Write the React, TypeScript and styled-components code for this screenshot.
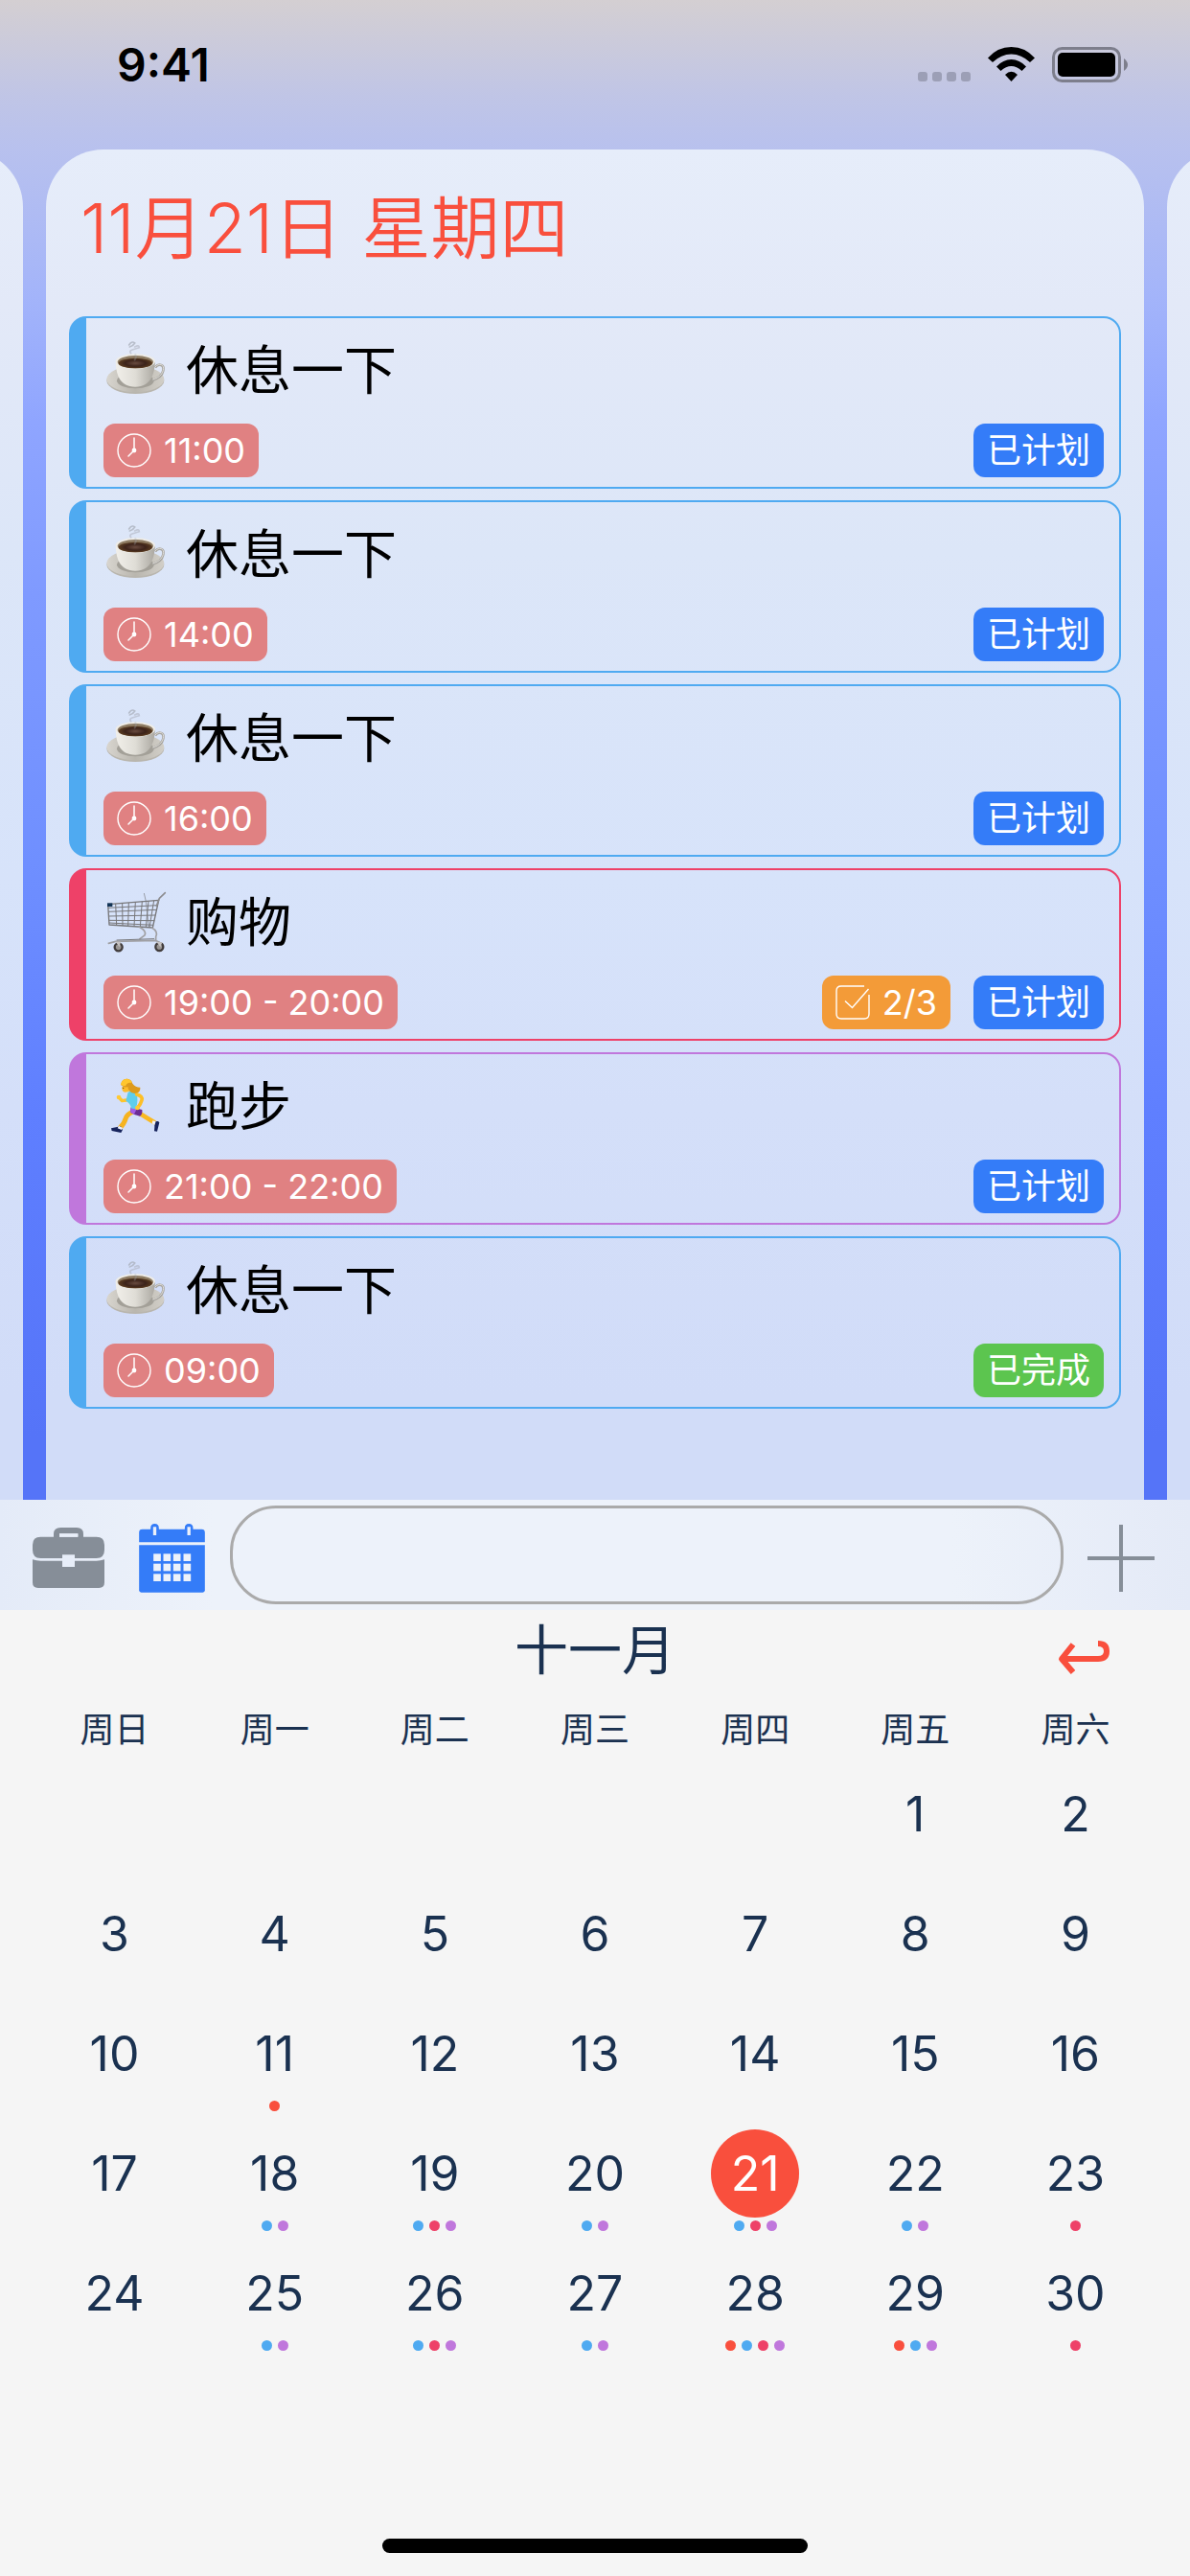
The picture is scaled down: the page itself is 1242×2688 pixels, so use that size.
import React from "react";
import styled, { createGlobalStyle } from "styled-components";

const GlobalStyle = createGlobalStyle`
  *, *::before, *::after { box-sizing: border-box; }
  body {
    margin: 0;
    font-family: Inter, "Noto Sans CJK SC", sans-serif;
    background: #f5f5f5;
  }
  button, input { font: inherit; }
  h1, h2, h3, ul { margin: 0; padding: 0; font-weight: inherit; }
`;

const palette = {
  sky: "#4faaf1",
  rose: "#ee4168",
  violet: "#c077dc",
  coral: "#f94f3d",
  blue: "#347cf8",
  green: "#5cc54f",
  orange: "#f39b38",
  brick: "#e08182",
  ink: "#1a3150",
  grey: "#868e98",
};

type Tone = keyof typeof palette;

const Page = styled.div`
  min-height: 100vh;
  display: flex;
  flex-direction: column;
`;

const Planner = styled.section`
  display: flex;
  flex-direction: column;
  background: linear-gradient(
    #d4cfd2 0,
    #cccbda 40px,
    #c0c5e6 100px,
    #b8c1ee 156px,
    #a3b4fa 310px,
    #8fa5ff 440px,
    #7f9aff 620px,
    #6f8fff 900px,
    #5f7fff 1160px,
    #5574f8 1500px
  );
`;

const StatusBar = styled.header`
  height: 156px;
  padding: 0 64px 20px 122px;
  display: flex;
  align-items: center;
  justify-content: space-between;
`;

const Clock = styled.time`
  font-size: 48px;
  line-height: 56px;
  font-weight: 600;
  color: #000;
`;

const StatusIcons = styled.svg`
  width: 221px;
  height: 40px;
  display: block;
`;

const Carousel = styled.main`
  display: flex;
  justify-content: center;
  gap: 24px;
  overflow: hidden;
`;

const DayPanel = styled.section`
  flex: 0 0 calc(100% - 96px);
  padding: 32px 24px 95px;
  border-radius: 60px 60px 0 0;
  background: linear-gradient(
    #e6edfa 0,
    #e3e9f8 160px,
    #dce6f8 420px,
    #d7e3fa 760px,
    #d4dff9 1000px,
    #d1dcf8 1300px
  );
`;

const DayTitle = styled.h1`
  padding: 0 12px;
  margin-bottom: 42px;
  font-size: 72px;
  line-height: 100px;
  font-weight: 350;
  color: ${palette.coral};
`;

const TaskList = styled.ul`
  list-style: none;
  display: flex;
  flex-direction: column;
  gap: 12px;
`;

const TaskCard = styled.li<{ $tone: Tone }>`
  height: 180px;
  padding: 16px 16px 10px 18px;
  border: 2px solid ${(p) => palette[p.$tone]};
  border-left-width: 18px;
  border-radius: 18px;
  display: flex;
  flex-direction: column;
  justify-content: space-between;
`;

const TaskHead = styled.div`
  display: flex;
  align-items: center;
  gap: 18px;
`;

const Emoji = styled.svg`
  width: 68px;
  height: 68px;
  flex: none;
`;

const TaskName = styled.h2`
  padding-top: 4px;
  font-size: 55px;
  line-height: 68px;
  font-weight: 400;
  color: #000;
`;

const TaskFoot = styled.div`
  display: flex;
  align-items: center;
  gap: 24px;
`;

const Badge = styled.span<{ $tone: Tone }>`
  height: 56px;
  padding: 0 14px;
  border-radius: 12px;
  display: flex;
  align-items: center;
  gap: 13px;
  font-size: 36px;
  line-height: 56px;
  white-space: nowrap;
  color: #fff;
  background: ${(p) => palette[p.$tone]};

  svg {
    width: 36px;
    height: 36px;
    flex: none;
  }
`;

const TimeBadge = styled(Badge)`
  margin-right: auto;
`;

const Toolbar = styled.form`
  height: 115px;
  padding: 0 36px 0 34px;
  display: flex;
  align-items: center;
  background: linear-gradient(90deg, #e4ebf8 0, #edf2fa 18%, #edf2fa 80%, #e4eaf7 100%);
`;

const IconButton = styled.button<{ $tone: Tone }>`
  padding: 6px 0 0;
  border: 0;
  background: none;
  color: ${(p) => palette[p.$tone]};
  display: flex;

  svg {
    display: block;
  }
`;

const ModeButtons = styled.div`
  display: flex;
  align-items: center;
  gap: 36px;
  margin-right: 26px;
`;

const EntryInput = styled.input`
  flex: 1;
  min-width: 0;
  height: 103px;
  margin-right: 24px;
  padding: 0 44px;
  border: 3px solid #aaa;
  border-radius: 48px;
  background: none;
  font-size: 48px;
  color: #000;
  outline: none;
`;

const CalendarPanel = styled.section`
  flex: 1;
  padding: 0 36px 24px;
  display: flex;
  flex-direction: column;
  color: ${palette.ink};
`;

const MonthBar = styled.div`
  height: 84px;
  padding: 0 48px;
  display: grid;
  grid-template-columns: 1fr auto 1fr;
  align-items: center;
`;

const MonthName = styled.h2`
  grid-column: 2;
  font-size: 56px;
  line-height: 84px;
  font-weight: 400;
`;

const TodayButton = styled(IconButton)`
  justify-self: end;
  padding-top: 16px;
`;

const MonthTable = styled.table`
  width: 100%;
  table-layout: fixed;
  border-collapse: collapse;
`;

const Weekday = styled.th`
  height: 83px;
  padding: 0 0 2px;
  font-size: 36px;
  line-height: 48px;
  font-weight: 400;
`;

const DayCell = styled.td`
  height: 125px;
  padding: 0;
  vertical-align: top;
`;

const DayButton = styled.button<{ $selected: boolean }>`
  width: 92px;
  height: 92px;
  margin: 0 auto;
  padding: 0;
  border: 0;
  border-radius: 50%;
  display: block;
  font-size: 50px;
  line-height: 92px;
  text-align: center;
  color: ${(p) => (p.$selected ? "#fff" : palette.ink)};
  background: ${(p) => (p.$selected ? palette.coral : "none")};
`;

const Dots = styled.div`
  margin-top: 3px;
  display: flex;
  justify-content: center;
  gap: 6px;
`;

const Dot = styled.span<{ $tone: Tone }>`
  width: 11px;
  height: 11px;
  border-radius: 50%;
  background: ${(p) => palette[p.$tone]};
`;

const HomeIndicator = styled.div`
  width: 444px;
  height: 15px;
  margin: auto auto 0;
  border-radius: 8px;
  background: #000;
`;

const CupIcon = () => (
  <Emoji viewBox="24 30 204 204" role="img" aria-label="咖啡">
    <defs>
      <linearGradient id="cupBody" x1="0" x2="1">
        <stop offset="0" stopColor="#f1efea" />
        <stop offset="0.5" stopColor="#dfddd6" />
        <stop offset="1" stopColor="#aaa7a0" />
      </linearGradient>
      <linearGradient id="saucer" x1="0" x2="1">
        <stop offset="0" stopColor="#d8d5cf" />
        <stop offset="0.5" stopColor="#b9b6ae" />
        <stop offset="1" stopColor="#d2cfc8" />
      </linearGradient>
      <radialGradient id="coffee">
        <stop offset="0" stopColor="#6a4c40" />
        <stop offset="0.6" stopColor="#3c231a" />
        <stop offset="1" stopColor="#5b3d22" />
      </radialGradient>
    </defs>
    <ellipse cx="124" cy="171" rx="90" ry="42" fill="#b9b6ae" />
    <ellipse cx="124" cy="167" rx="90" ry="41" fill="url(#saucer)" />
    <ellipse cx="124" cy="172" rx="58" ry="24" fill="#a3a098" />
    <path
      d="M186 130 C198 116 215 122 211 140 C208 155 193 165 178 170"
      fill="none"
      stroke="#a8a6a1"
      strokeWidth="8"
    />
    <path
      d="M186 129 C198 114 216 121 211 139 C208 154 193 164 178 168"
      fill="none"
      stroke="#dedcd8"
      strokeWidth="3"
    />
    <path d="M62 112 C64 150 72 191 124 191 C173 191 183 150 186 112 Z" fill="url(#cupBody)" />
    <ellipse cx="124" cy="111" rx="62" ry="23" fill="#efede8" />
    <ellipse cx="124" cy="113" rx="56" ry="20" fill="#8d7b62" />
    <ellipse cx="124" cy="117" rx="53" ry="16" fill="url(#coffee)" />
    <g fill="none" stroke="#a7acb8" strokeLinecap="round">
      <path d="M104 60 Q112 46 122 54 Q116 64 106 66" strokeWidth="5" opacity="0.7" />
      <path d="M122 66 Q136 58 136 68 Q124 72 112 76 Q104 80 110 86" strokeWidth="5" opacity="0.5" />
      <path d="M124 90 Q128 98 122 106" strokeWidth="6" opacity="0.3" />
    </g>
  </Emoji>
);

const CartIcon = () => (
  <Emoji viewBox="24 30 204 204" role="img" aria-label="购物车">
    <g fill="none" stroke="#77777a" strokeWidth="3" strokeLinejoin="round">
      <path d="M38 83 L197 70 L178 156 L42 147 Z" strokeWidth="4" />
      <path d="M39 94 L193 86 M40 106 L191 100 M41 120 L187 117 M41 133 L184 134 M42 141 L180 148" />
      <path d="M62 81 L65 149 M83 80 L84 150 M103 78 L101 151 M124 76 L120 152 M145 74 L139 153 M165 72 L157 154 M182 71 L168 155" />
      <path d="M151 48 L157 74 L161 110 L166 155" strokeWidth="2" />
      <path d="M190 88 L199 64 L217 47" stroke="#8d8d90" strokeWidth="5" strokeLinecap="round" />
    </g>
    <g fill="none" stroke="#a0a0a4" strokeWidth="5" strokeLinecap="round">
      <path d="M136 154 Q160 166 153 180 L138 191" />
      <path d="M175 156 Q196 168 188 184 L188 196" />
      <path d="M40 205 L62 199 L184 196 Q196 197 200 206" />
      <path d="M66 195 L182 191" stroke="#77777a" strokeWidth="3" />
    </g>
    <rect x="36" y="79" width="16" height="11" fill="#123456" />
    <g fill="#9a9694" stroke="#413c3c" strokeWidth="7">
      <circle cx="71" cy="217" r="12" />
      <circle cx="199" cy="216" r="12" />
    </g>
    <path d="M62 200 L78 200 L74 217 Z M190 200 L208 202 L202 217 Z" fill="#c7c3c2" />
  </Emoji>
);

const RunnerIcon = () => (
  <Emoji viewBox="24 30 204 204" role="img" aria-label="跑步">
    <g strokeLinecap="round" strokeLinejoin="round" fill="none">
      <path d="M116 156 Q98 164 94 176 Q88 196 74 208" stroke="#f6b320" strokeWidth="15" />
      <path d="M138 162 Q154 172 184 190" stroke="#f9b922" strokeWidth="14" />
      <path d="M96 120 L82 122 L73 112" stroke="#fdc52c" strokeWidth="10" />
    </g>
    <path d="M78 202 L84 212 L79 222 L50 216 L48 208 Z" fill="#16235c" />
    <path d="M72 200 L84 207 L81 213 L68 208 Z" fill="#f2f3fb" />
    <path d="M184 187 L195 186 L199 190 L192 218 L183 217 L184 204 Z" fill="#16235c" />
    <path d="M178 184 L188 187 L184 198 L176 193 Z" fill="#f2f3fb" />
    <path d="M110 142 L145 150 Q147 164 138 170 Q124 168 108 158 Z" fill="#6a2c94" />
    <path d="M110 144 L128 148 L120 164 L108 158 Z" fill="#a45ce6" />
    <path d="M101 95 Q114 88 127 96 Q134 118 126 148 L112 146 Q108 130 94 122 Z" fill="#5fcdec" />
    <path
      d="M128 102 Q148 108 144 120 Q140 134 132 142"
      fill="none"
      stroke="#fdbf27"
      strokeWidth="11"
      strokeLinecap="round"
      strokeLinejoin="round"
    />
    <circle cx="72" cy="111" r="7" fill="#ffc933" />
    <circle cx="130" cy="144" r="7" fill="#ffc933" />
    <path d="M82 78 Q80 94 92 95 L104 93 L106 76 Z" fill="#fdbc2b" />
    <path
      d="M78 72 Q82 52 98 53 Q112 55 115 68 Q124 80 139 80 Q141 98 122 99 Q102 96 100 78 Q88 82 78 72 Z"
      fill="#dd9a1c"
    />
    <path d="M78 71 Q82 52 98 53 Q111 55 113 66 Q98 62 93 76 Q84 76 78 71 Z" fill="#ffc62d" />
    <circle cx="86" cy="82" r="2" fill="#583c14" />
  </Emoji>
);

const ClockIcon = () => (
  <svg viewBox="0 0 36 36" fill="none" stroke="#fff" aria-hidden="true">
    <circle cx="18" cy="18" r="17" strokeWidth="1.4" />
    <path d="M18 5 V18 L12 24" strokeWidth="1.5" strokeLinecap="round" />
    <circle cx="18" cy="18" r="2.4" fill="#fff" stroke="none" />
  </svg>
);

const CheckIcon = () => (
  <svg viewBox="0 0 36 36" fill="none" stroke="#fff" strokeWidth="1.4" aria-hidden="true">
    <path d="M30 1 H6 Q1 1 1 6 V30 Q1 35 6 35 H30 Q35 35 35 30 V10" />
    <path d="M10 16.5 L17.5 23.5 L34.5 4" />
  </svg>
);

const BriefcaseIcon = () => (
  <svg width="75" height="63" viewBox="0 0 225 189" fill="currentColor" aria-hidden="true">
    <path d="M66 29 V20 Q66 0 88 0 H138 Q159 0 159 20 V29 H200 Q225 29 225 54 V70 Q225 96 200 96 H132 V85 H93 V96 H25 Q0 96 0 70 V54 Q0 29 25 29 Z M84 29 H142 V19 H84 Z" />
    <path d="M0 100 Q12 104 25 104 H93 V123 H132 V104 H200 Q213 104 225 100 V172 Q225 189 208 189 H17 Q0 189 0 172 Z" />
    <path d="M84 19 H142 V29 H84 Z" fill="#e9eff9" />
  </svg>
);

const CalendarIcon = () => (
  <svg width="69" height="72" viewBox="0 0 206 216" fill="currentColor" aria-hidden="true">
    <path
      fillRule="evenodd"
      d="M36 17 V14 Q36 0 49 0 Q62 0 62 14 V17 H143 V14 Q143 0 156 0 Q169 0 169 14 V17 H196 Q206 17 206 27 V58 H0 V27 Q0 17 10 17 Z M44 10 V36 H54 V10 Z M151 10 V36 H161 V10 Z"
    />
    <path d="M0 67 H206 V208 Q206 215 199 215 H7 Q0 215 0 208 Z" />
    <g fill="#edf2fa">
      {[94, 125, 157].map((y) =>
        [45, 76, 107, 139].map((x) => <rect key={`${x}-${y}`} x={x} y={y} width="23" height="23" />)
      )}
    </g>
  </svg>
);

const PlusIcon = () => (
  <svg width="72" height="72" viewBox="0 0 72 72" stroke="currentColor" strokeWidth="4" aria-hidden="true">
    <path d="M1 36 H71 M36 1 V71" />
  </svg>
);

const ReturnIcon = () => (
  <svg width="54" height="36" viewBox="0 0 54 36" fill="none" stroke="currentColor" strokeWidth="6" aria-hidden="true">
    <path d="M16 4 L4 19 L16 33" strokeLinejoin="round" />
    <path d="M5 19 H42 Q51 19 51 11 Q51 3 42 3" />
  </svg>
);

type Task = {
  icon: () => React.ReactElement;
  name: string;
  time: string;
  tone: Tone;
  progress?: string;
  done?: boolean;
};

const tasks: Task[] = [
  { icon: CupIcon, name: "休息一下", time: "11:00", tone: "sky" },
  { icon: CupIcon, name: "休息一下", time: "14:00", tone: "sky" },
  { icon: CupIcon, name: "休息一下", time: "16:00", tone: "sky" },
  { icon: CartIcon, name: "购物", time: "19:00 - 20:00", tone: "rose", progress: "2/3" },
  { icon: RunnerIcon, name: "跑步", time: "21:00 - 22:00", tone: "violet" },
  { icon: CupIcon, name: "休息一下", time: "09:00", tone: "sky", done: true },
];

const weekdays = ["周日", "周一", "周二", "周三", "周四", "周五", "周六"];

const marks: Record<number, Tone[]> = {
  11: ["coral"],
  18: ["sky", "violet"],
  19: ["sky", "rose", "violet"],
  20: ["sky", "violet"],
  21: ["sky", "rose", "violet"],
  22: ["sky", "violet"],
  23: ["rose"],
  25: ["sky", "violet"],
  26: ["sky", "rose", "violet"],
  27: ["sky", "violet"],
  28: ["coral", "sky", "rose", "violet"],
  29: ["coral", "sky", "violet"],
  30: ["rose"],
};

const FIRST_WEEKDAY = 5;
const weeks = [0, 1, 2, 3, 4].map((w) => weekdays.map((_, d) => w * 7 + d - FIRST_WEEKDAY + 1));

export default function App() {
  const [selected, setSelected] = React.useState(21);
  const [draft, setDraft] = React.useState("");

  return (
    <Page>
      <GlobalStyle />
      <Planner>
        <StatusBar>
          <Clock>9:41</Clock>
          <StatusIcons viewBox="0 0 221 40" aria-hidden="true">
            <g fill="#9c9fb6">
              {[1, 16, 31, 46].map((x) => (
                <rect key={x} x={x} y="27" width="10" height="10" rx="3" />
              ))}
            </g>
            <path d="M74 12.5 Q84 1 98.5 1 Q113 1 123 12.5 L118 17 Q109 8.5 98.5 8.5 Q88 8.5 79 17 Z" />
            <path d="M83 21.5 Q90 14 98.5 14 Q107 14 114 21.5 L109.5 26 Q104 21 98.5 21 Q93 21 87.5 26 Z" />
            <path d="M92 30 Q98.5 23.5 105 30 L98.5 37 Z" />
            <rect x="142.500" y="2.500" width="69" height="34" rx="9" fill="none" stroke="#7d7e8c" strokeWidth="3" />
            <rect x="147" y="7" width="60" height="25" rx="5" />
            <path d="M216 13 Q220 16 220 19.5 Q220 23 216 26 Z" fill="#7d7e8c" />
          </StatusIcons>
        </StatusBar>

        <Carousel>
          <DayPanel aria-hidden="true" />
          <DayPanel>
            <DayTitle>11月21日 星期四</DayTitle>
            <TaskList>
              {tasks.map((task) => (
                <TaskCard key={task.time} $tone={task.tone}>
                  <TaskHead>
                    <task.icon />
                    <TaskName>{task.name}</TaskName>
                  </TaskHead>
                  <TaskFoot>
                    <TimeBadge $tone="brick">
                      <ClockIcon />
                      {task.time}
                    </TimeBadge>
                    {task.progress && (
                      <Badge $tone="orange">
                        <CheckIcon />
                        {task.progress}
                      </Badge>
                    )}
                    <Badge $tone={task.done ? "green" : "blue"}>{task.done ? "已完成" : "已计划"}</Badge>
                  </TaskFoot>
                </TaskCard>
              ))}
            </TaskList>
          </DayPanel>
          <DayPanel aria-hidden="true" />
        </Carousel>
      </Planner>

      <Toolbar onSubmit={(e) => e.preventDefault()}>
        <ModeButtons>
          <IconButton type="button" $tone="grey" aria-label="任务箱">
            <BriefcaseIcon />
          </IconButton>
          <IconButton type="button" $tone="blue" aria-label="日历">
            <CalendarIcon />
          </IconButton>
        </ModeButtons>
        <EntryInput aria-label="新任务" value={draft} onChange={(e) => setDraft(e.target.value)} />
        <IconButton type="submit" $tone="grey" aria-label="添加">
          <PlusIcon />
        </IconButton>
      </Toolbar>

      <CalendarPanel>
        <MonthBar>
          <MonthName>十一月</MonthName>
          <TodayButton type="button" $tone="coral" aria-label="回到今天" onClick={() => setSelected(21)}>
            <ReturnIcon />
          </TodayButton>
        </MonthBar>
        <MonthTable>
          <thead>
            <tr>
              {weekdays.map((d) => (
                <Weekday key={d} scope="col">
                  {d}
                </Weekday>
              ))}
            </tr>
          </thead>
          <tbody>
            {weeks.map((week, w) => (
              <tr key={w}>
                {week.map((day) => (
                  <DayCell key={day}>
                    {day > 0 && (
                      <>
                        <DayButton type="button" $selected={day === selected} onClick={() => setSelected(day)}>
                          {day}
                        </DayButton>
                        <Dots>
                          {(marks[day] ?? []).map((tone) => (
                            <Dot key={tone} $tone={tone} />
                          ))}
                        </Dots>
                      </>
                    )}
                  </DayCell>
                ))}
              </tr>
            ))}
          </tbody>
        </MonthTable>
        <HomeIndicator />
      </CalendarPanel>
    </Page>
  );
}
